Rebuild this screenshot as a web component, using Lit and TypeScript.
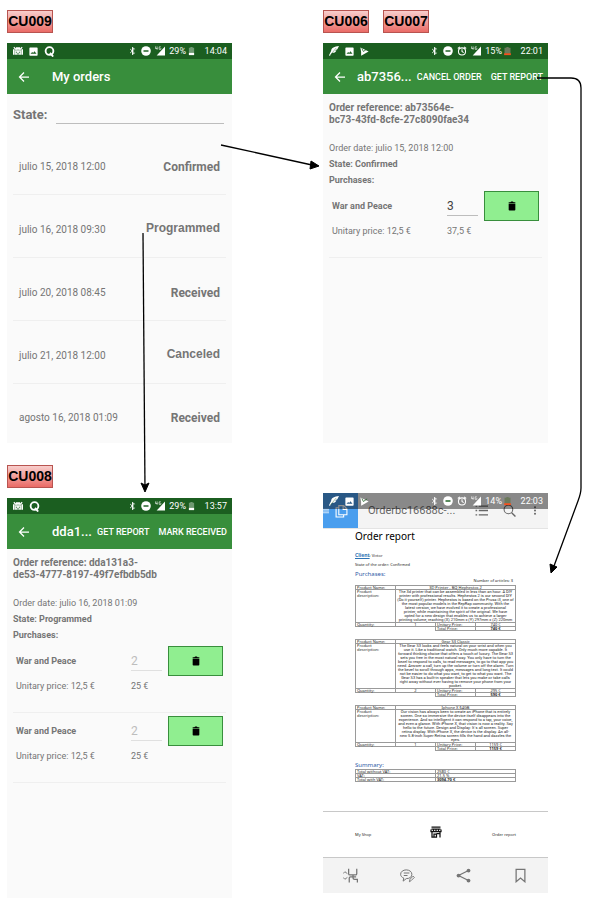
import { LitElement, html, svg, css, nothing, TemplateResult } from "lit";
import { customElement, property } from "lit/decorators.js";

type GlyphName =
  | "robot" | "photo" | "q" | "feather" | "play" | "bluetooth" | "dnd" | "alarm" | "signal"
  | "battery" | "batteryLow" | "back" | "trash" | "menu" | "copies" | "list" | "search" | "more"
  | "shop" | "fit" | "comment" | "share" | "bookmark";

const GLYPHS: Record<GlyphName, TemplateResult> = {
  robot: svg`<path d="M2 3l6 6M22 3l-6 6" stroke="currentColor" stroke-width="3"/><path d="M0 8h4v13H0zM20 8h4v13h-4zM7 3h10v6H7zM5 10h14v11H5z" fill="currentColor"/><path d="M7 15h3M14 15h3M9 19h6" stroke="#1b5e20" stroke-width="2"/>`,
  photo: svg`<path fill="currentColor" fill-rule="evenodd" d="M23 21V3a2 2 0 0 0-2-2H3a2 2 0 0 0-2 2v18a2 2 0 0 0 2 2h18a2 2 0 0 0 2-2zM8.500 13l2.500 3 3.500-4.500L20 18H4z"/>`,
  q: svg`<circle cx="12" cy="11" r="8.500" fill="none" stroke="currentColor" stroke-width="4"/><path d="M13 15l7 8" stroke="currentColor" stroke-width="4"/>`,
  feather: svg`<path fill="currentColor" d="M24 0C13 1 6 4 5 12l-5 10 2 2 5-7c6 0 9-2 11-6l-4 0 6-3z"/><path d="M17 5L3 22" stroke="#1b5e20" stroke-width="1"/>`,
  play: svg`<path fill="currentColor" d="M1 1l22 11L3 23V13z"/><path d="M5 4l4 8 10-7" stroke="#1b5e20" stroke-width="2" fill="none"/>`,
  bluetooth: svg`<path d="M6 7l11 10-5 5V2l5 5L6 17" fill="none" stroke="currentColor" stroke-width="2.500"/>`,
  dnd: svg`<circle cx="12" cy="12" r="11.500"/><path d="M6 12h12" stroke="#1b5e20" stroke-width="3.500"/>`,
  alarm: svg`<circle cx="12" cy="13" r="8.500" fill="none" stroke="currentColor" stroke-width="2.500"/><path d="M12 8v5l4 3M2 6l5-4M22 6l-5-4" fill="none" stroke="currentColor" stroke-width="2.500"/>`,
  signal: svg`<path fill="currentColor" d="M24 1v22H4z"/><path d="M1 1v5h5M5 1v8M14 2h-4v6h4V5" fill="none" stroke="currentColor" stroke-width="1.500"/>`,
  battery: svg`<path fill="#6f9a72" d="M9 1h6v2h4v14H5V3h4z"/><path fill="currentColor" d="M5 17h14v6H5z"/>`,
  batteryLow: svg`<path fill="#6c7a5c" d="M9 1h6v2h5v16H4V3h5z"/><path fill="#f4511e" d="M3 18h18v5H3z"/>`,
  back: svg`<path d="M22 12H4M12 3l-9 9 9 9" fill="none" stroke="currentColor" stroke-width="2.500"/>`,
  trash: svg`<path fill="currentColor" d="M4 3h4l2-2h4l2 2h4v3H4zM4 7h16v14a2 2 0 0 1-2 2H6a2 2 0 0 1-2-2z"/>`,
  menu: svg`<path d="M0 5h24M0 12h24M0 19h24" stroke="currentColor" stroke-width="3"/>`,
  copies: svg`<path d="M7 2h9l6 6v11H7zM15 2v7h7M7 6H2v17h14v-4" fill="none" stroke="currentColor" stroke-width="2"/>`,
  list: svg`<path d="M1 4h3M1 12h3M1 20h3M7 4h17M7 12h17M7 20h17" stroke="currentColor" stroke-width="2.500"/>`,
  search: svg`<circle cx="10" cy="10" r="8" fill="none" stroke="currentColor" stroke-width="2"/><path d="M16 16l7 7" stroke="currentColor" stroke-width="2.500"/>`,
  more: svg`<circle cx="12" cy="2" r="3"/><circle cx="12" cy="12" r="3"/><circle cx="12" cy="22" r="3"/>`,
  shop: svg`<path fill="none" stroke="currentColor" stroke-width="2.500" d="M3 2h18M3 6h18M1 11h22M2 7v5M7 7v5M12 7v5M17 7v5M22 7v5M4 12v10h9v-6H8v6M13 15h7M20 12v11"/>`,
  fit: svg`<path d="M0 9l3-3 4 3M0 15l3 3 4-3" fill="none" stroke="currentColor" stroke-width="1.500"/><path d="M9 1v8q0 2 2 2h9q2 0 2-2V1M10 23v-7q0-2 2-2h9M16 11v4q0 3 3 3h4v5" fill="none" stroke="currentColor" stroke-width="2"/>`,
  comment: svg`<path d="M10 3c5 0 9 3 9 7s-3 7-9 7l-5 4 1-5c-3-1-5-3-5-6 0-4 4-7 9-7zM6 8h9M6 12h6" fill="none" stroke="currentColor" stroke-width="1.600"/><path d="M15 22l1-4 5-5 2 2-5 5z" fill="#f3f3f3" stroke="currentColor" stroke-width="1.500"/>`,
  share: svg`<path d="M20 4L4 12l16 8" fill="none" stroke="currentColor" stroke-width="2"/><circle cx="20" cy="4" r="3"/><circle cx="4" cy="12" r="3"/><circle cx="20" cy="20" r="3"/>`,
  bookmark: svg`<path d="M5 2h14v20l-7-6-7 6z" fill="none" stroke="currentColor" stroke-width="2"/>`,
};

const glyph = (name: GlyphName) =>
  html`<svg class="glyph ${name}" viewBox="0 0 24 24" aria-hidden="true" fill="currentColor">${GLYPHS[name]}</svg>`;

const base = css`
  :host { display: block; font-family: Roboto, "Liberation Sans", sans-serif; color: #757575; }
  * { box-sizing: border-box; }
  button { border: 0; padding: 0; margin: 0; background: none; color: inherit; font: inherit; }
  input { border: 0; margin: 0; padding: 0; background: none; outline: none; font: inherit; border-radius: 0; min-width: 0; }
  h1, h2, p, ul { margin: 0; padding: 0; font: inherit; }
  .glyph { display: block; width: 10px; height: 10px; flex: none; }
`;

@customElement("status-bar")
class StatusBar extends LitElement {
  @property({ attribute: false }) notices: GlyphName[] = [];
  @property({ attribute: false }) system: GlyphName[] = [];
  @property() level = "";
  @property() clock = "";

  static styles = [base, css`
    :host { background: #1b5e20; color: #fff; height: 16px; }
    .bar { display: flex; align-items: center; height: 100%; padding: 0 5px 0 6px; font-size: 9px; line-height: 16px; }
    .notices { display: flex; align-items: center; gap: 6px; flex: 1; }
    .system { display: flex; align-items: center; gap: 4px; }
    .charge { display: flex; align-items: center; gap: 1px; }
    .notices .photo, .notices .play { width: 9px; height: 9px; }
    .notices .q { width: 11px; height: 11px; }
    .clock { width: 31px; text-align: right; }
    .bluetooth, .glyph.battery, .glyph.batteryLow { width: 9px; }
  `];

  render() {
    return html`<div class="bar">
      <div class="notices">${this.notices.map(glyph)}</div>
      <div class="system">
        ${this.system.map(glyph)}
        <span class="charge">${this.level}${glyph(this.level === "29%" ? "battery" : "batteryLow")}</span>
      </div>
      <span class="clock">${this.clock}</span>
    </div>`;
  }
}

@customElement("app-bar")
class AppBar extends LitElement {
  @property() heading = "";
  @property({ attribute: false }) actions: string[] = [];
  @property({ type: Boolean, reflect: true }) tight = false;

  static styles = [base, css`
    :host { background: #388e3c; color: #fff; }
    .bar { display: flex; align-items: center; height: 35px; padding: 0 5px 0 11px; }
    .nav { margin-right: 22px; }
    :host([tight]) .nav { margin-right: 11px; }
    .nav .glyph { width: 12px; height: 12px; }
    h1 { flex: 1; min-width: 0; font-size: 13px; font-weight: 500; line-height: 20px; white-space: nowrap; }
    .actions { display: flex; gap: 9px; font-size: 9px; font-weight: 500; line-height: 16px; white-space: nowrap; }
  `];

  render() {
    return html`<header class="bar">
      <button class="nav" aria-label="Back">${glyph("back")}</button>
      <h1>${this.heading}</h1>
      <div class="actions">${this.actions.map((a) => html`<button>${a}</button>`)}</div>
    </header>`;
  }
}

const ORDERS = [
  { date: "julio 15, 2018 12:00", state: "Confirmed", plain: false },
  { date: "julio 16, 2018 09:30", state: "Programmed", plain: true },
  { date: "julio 20, 2018 08:45", state: "Received", plain: false },
  { date: "julio 21, 2018 12:00", state: "Canceled", plain: true },
  { date: "agosto 16, 2018 01:09", state: "Received", plain: false },
];

@customElement("order-list")
class OrderList extends LitElement {
  static styles = [base, css`
    .body { padding: 0 6px; }
    .filter { display: flex; align-items: center; gap: 9px; height: 38px; padding-right: 2px; }
    label { font-size: 13px; font-weight: 700; line-height: 20px; padding-top: 4px; }
    input { flex: 1; height: 20px; margin-top: 2px; border-bottom: 1px solid #bdbdbd; color: #424242; font-size: 12px; }
    ul { list-style: none; }
    li { display: flex; justify-content: space-between; align-items: center; height: 63px; padding: 8px 6px 0; border-bottom: 1px solid #efefef; }
    li:last-child { border-bottom: 0; height: 59px; }
    .date { font-size: 10px; line-height: 16px; }
    .state { font-size: 12px; font-weight: 700; line-height: 16px; }
    .plain { font-family: "Liberation Sans", sans-serif; padding-bottom: 4px; }
  `];

  render() {
    return html`<section class="body">
      <div class="filter"><label for="state">State:</label><input id="state" type="text" /></div>
      <ul>${ORDERS.map((o) => html`<li>
        <span class="date">${o.date}</span><span class="state ${o.plain ? "plain" : ""}">${o.state}</span>
      </li>`)}</ul>
    </section>`;
  }
}

interface Purchase { name: string; unit: string; qty: string; total: string }

@customElement("order-detail")
class OrderDetail extends LitElement {
  @property({ attribute: false }) reference: string[] = [];
  @property() date = "";
  @property() state = "";
  @property({ type: Boolean }) locked = false;
  @property({ attribute: false }) purchases: Purchase[] = [];

  static styles = [base, css`
    .body { padding: 8px 6px 0; }
    h2 { font-size: 10px; font-weight: 700; line-height: 12px; margin-bottom: 14px; }
    p { font-size: 9px; line-height: 16px; }
    .strong { font-weight: 700; }
    .item { display: grid; grid-template-columns: 1fr 31px 55px; column-gap: 6px; align-items: center;
      grid-template-rows: 36px 14px; height: 70px; padding: 0 3px; border-bottom: 1px solid #efefef; }
    .name { font-size: 9px; font-weight: 700; }
    .qty { width: 31px; height: 20px; border-bottom: 1px solid #bdbdbd; font-size: 12px; color: #424242; }
    .qty:disabled { color: #bdbdbd; border-color: #e0e0e0; }
    .remove { display: grid; place-items: center; height: 30px; background: #90ee90; border: 1px solid #388e3c; color: #000; }
    .unit, .total { font-size: 9px; line-height: 14px; white-space: nowrap; }
    .total { grid-column: 2 / 4; }
  `];

  render() {
    return html`<section class="body">
      <h2>Order reference: ${this.reference[0]}<br />${this.reference[1]}</h2>
      <p>Order date: ${this.date}</p>
      <p class="strong">State: ${this.state}</p>
      <p class="strong">Purchases:</p>
      ${this.purchases.map((p) => html`<div class="item">
        <span class="name">${p.name}</span>
        <input class="qty" type="text" aria-label="Quantity" .value=${p.qty} ?disabled=${this.locked} />
        <button class="remove" aria-label="Remove">${glyph("trash")}</button>
        <span class="unit">Unitary price: ${p.unit}</span>
        <span class="total">${p.total}</span>
      </div>`)}
    </section>`;
  }
}

interface Article { name: string; lines: string[]; qty: string; unit: string; total: string }

const ARTICLES: Article[] = [
  {
    name: "3D Printer - BQ Hephestos 2", qty: "1", unit: "740 €", total: "740 €",
    lines: [
      "The 3d printer that can be assembled in less than an hour. A DIY",
      "printer with professional results. Hephestos 2 is our second DIY",
      "(Do it yourself) printer. Hephestos is based on the Prusa i3, one of",
      "the most popular models in the RepRap community. With the",
      "latest version, we have evolved it to create a professional",
      "printer, while maintaining the spirit of the original. We have",
      "opted for a new design that enables us to achieve a larger",
      "printing volume, reaching (X) 210mm x (Y) 297mm x (Z) 220mm",
    ],
  },
  {
    name: "Gear S3 Classic", qty: "2", unit: "295 €", total: "590 €",
    lines: [
      "The Gear S3 looks and feels natural on your wrist and when you",
      "use it. Like a traditional watch. Only much more capable. It",
      "forward thinking choice that offers a touch of luxury. The Gear S3",
      "sets you free in the most natural way. You only have to turn the",
      "bezel to respond to calls, to read messages, to go to that app you",
      "need. Answer a call, turn up the volume or turn off the alarm. Turn",
      "the bezel to scroll through apps, messages and long text. It could",
      "not be easier to do what you want, to get to what you want. The",
      "Gear S3 has a built-in speaker that lets you make or take calls",
      "right away without ever having to remove your phone from your",
      "pocket.",
    ],
  },
  {
    name: "Iphone X 64GB", qty: "1", unit: "1159 €", total: "1159 €",
    lines: [
      "Our vision has always been to create an iPhone that is entirely",
      "screen. One so immersive the device itself disappears into the",
      "experience. And so intelligent it can respond to a tap, your voice,",
      "and even a glance. With iPhone X, that vision is now a reality. Say",
      "hello to the future. Design and Display: It´s all screen. Super",
      "retina display. With iPhone X, the device is the display. An all-",
      "new 5.8-inch Super Retina screen fills the hand and dazzles the",
      "eyes.",
    ],
  },
];

@customElement("report-viewer")
class ReportViewer extends LitElement {
  static styles = [base, css`
    :host { position: relative; background: #fff; color: #222; font-family: "Noto Sans", sans-serif; }
    .overlay { position: absolute; top: 0; left: 0; right: 0; background: rgba(0, 0, 0, 0.44); }
    .tools { display: flex; align-items: center; height: 36px; background: #f4f4f4; border-bottom: 1px solid #e4e4e4;
      color: #666; font-family: Roboto, sans-serif; padding-right: 9px; }
    .tab { display: flex; align-items: center; gap: 6px; width: 35px; height: 35px; background: #4a9eee; color: #fff; }
    .tab .menu { width: 6px; height: 10px; }
    .tab .copies { width: 13px; height: 14px; }
    .name { flex: 1; padding-left: 10px; font-size: 11px; line-height: 16px; white-space: nowrap; }
    .icons { display: flex; gap: 15px; }
    .icons .glyph { width: 13px; height: 13px; }
    .icons .more { width: 8px; }
    .doc { padding: 0 32px; font-size: 4px; line-height: 4px; height: 283px; border-bottom: 1px solid #c8c8c8; }
    h1 { font-size: 10px; line-height: 15px; color: #000; }
    .client { line-height: 6px; margin-top: 8px; }
    .client b { color: #2e74b5; font-size: 5px; text-decoration: underline; }
    .status { margin-top: 3px; line-height: 6px; }
    h2 { color: #2f5aa8; font-size: 6px; line-height: 8px; margin-top: 2px; }
    .closing { margin-top: 10px; }
    .count { text-align: right; line-height: 4px; margin: 1px 3px 2px; }
    table { width: 100%; border-collapse: collapse; table-layout: fixed; margin-bottom: 8px; }
    td, th { border: 1px solid #9a9a9a; padding: 0 1px; height: 4px; line-height: 3px; text-align: center; vertical-align: top; font-weight: 400; }
    th { text-align: left; }
    .left { text-align: left; }
    .text { line-height: 4px; padding: 0; white-space: nowrap; font-family: Roboto, sans-serif; }
    .label { line-height: 4px; }
    .blank { border: 0; }
    .summary { margin: 0; }
    .foot { display: grid; grid-template-columns: 1fr auto 1fr; align-items: center; height: 46px; padding: 0 32px;
      font-size: 4px; border-bottom: 1px solid #c8c8c8; }
    .foot .shop { width: 12px; height: 12px; margin-bottom: 6px; color: #111; }
    .end { text-align: right; }
    .dock { display: flex; justify-content: space-between; align-items: center; height: 35px; padding: 0 20px; background: #f3f3f3; color: #757575; }
    .dock .glyph { width: 15px; height: 15px; }
  `];

  render() {
    return html`
      <div class="tools">
        <div class="tab">${glyph("menu")}${glyph("copies")}</div>
        <span class="name">Orderbc16688c-...</span>
        <div class="icons">
          <button aria-label="Contents">${glyph("list")}</button>
          <button aria-label="Search">${glyph("search")}</button>
          <button aria-label="More">${glyph("more")}</button>
        </div>
      </div>
      <status-bar class="overlay" .notices=${["feather", "photo", "play"]} .system=${["bluetooth", "dnd", "alarm", "signal"]} level="14%" clock="22:03"></status-bar>
      <article class="doc">
        <h1>Order report</h1>
        <p class="client"><b>Client</b>: Victor</p>
        <p class="status">State of the order: Confirmed</p>
        <h2>Purchases:</h2>
        <p class="count">Number of articles: 3</p>
        ${ARTICLES.map((a) => html`<table>
          <tr><th>Product Name:</th><td colspan="3">${a.name}</td></tr>
          <tr><th class="label">Product description:</th><td colspan="3" class="text">${a.lines.map((l, i) => html`${i ? html`<br />` : nothing}${l}`)}</td></tr>
          <tr><th>Quantity:</th><td>${a.qty}</td><td class="left">Unitary Price:</td><td>${a.unit}</td></tr>
          <tr><td class="blank" colspan="2"></td><td class="left">Total Price:</td><td><b>${a.total}</b></td></tr>
        </table>`)}
        <h2 class="closing">Summary:</h2>
        <table class="summary">
          <tr><th>Total without VAT:</th><td class="left">2580 €</td></tr>
          <tr><th>VAT:</th><td class="left">21.5 %</td></tr>
          <tr><th>Total with VAT:</th><td class="left"><b>3094.70 €</b></td></tr>
        </table>
      </article>
      <div class="foot"><span>My Shop</span>${glyph("shop")}<span class="end">Order report</span></div>
      <nav class="dock">
        <button aria-label="Fit">${glyph("fit")}</button>
        <button aria-label="Comment">${glyph("comment")}</button>
        <button aria-label="Share">${glyph("share")}</button>
        <button aria-label="Bookmark">${glyph("bookmark")}</button>
      </nav>`;
  }
}

@customElement("app-root")
class AppRoot extends LitElement {
  static styles = [base, css`
    :host { position: relative; background: #fff; }
    .board { display: grid; grid-template-columns: 1fr 1fr; column-gap: 91px; padding: 10px 47px 9px 7px; align-items: start; }
    .column { min-width: 0; display: flex; flex-direction: column; gap: 10px; }
    .tags { display: flex; gap: 14px; }
    .tag { height: 23px; width: 46px; border: 1px solid #b85450; background: linear-gradient(#f8cecc, #ea6b66);
      color: #000; font: 700 14px/21px "Liberation Sans", sans-serif; text-align: center; white-space: nowrap; }
    .phone { min-height: 400px; background: #fafafa; }
    .below { margin-top: 12px; }
    .viewer { margin-top: 40px; }
    .links { position: absolute; inset: 0; width: 100%; height: 100%; pointer-events: none; }
  `];

  render() {
    return html`
      <main class="board">
        <div class="column">
          <div class="tags"><span class="tag">CU009</span></div>
          <div class="phone">
            <status-bar .notices=${["robot", "photo", "q"]} .system=${["bluetooth", "dnd", "signal"]} level="29%" clock="14:04"></status-bar>
            <app-bar heading="My orders"></app-bar>
            <order-list></order-list>
          </div>
          <div class="tags below"><span class="tag">CU008</span></div>
          <div class="phone">
            <status-bar .notices=${["robot", "q"]} .system=${["bluetooth", "dnd", "signal"]} level="29%" clock="13:57"></status-bar>
            <app-bar heading="dda1..." .actions=${["GET REPORT", "MARK RECEIVED"]}></app-bar>
            <order-detail .reference=${["dda131a3-", "de53-4777-8197-49f7efbdb5db"]} date="julio 16, 2018 01:09" state="Programmed" locked
              .purchases=${[
                { name: "War and Peace", unit: "12,5 €", qty: "2", total: "25 €" },
                { name: "War and Peace", unit: "12,5 €", qty: "2", total: "25 €" },
              ]}></order-detail>
          </div>
        </div>
        <div class="column">
          <div class="tags"><span class="tag">CU006</span><span class="tag">CU007</span></div>
          <div class="phone">
            <status-bar .notices=${["feather", "photo", "play"]} .system=${["bluetooth", "dnd", "alarm", "signal"]} level="15%" clock="22:01"></status-bar>
            <app-bar tight heading="ab7356..." .actions=${["CANCEL ORDER", "GET REPORT"]}></app-bar>
            <order-detail .reference=${["ab73564e-", "bc73-43fd-8cfe-27c8090fae34"]} date="julio 15, 2018 12:00" state="Confirmed"
              .purchases=${[{ name: "War and Peace", unit: "12,5 €", qty: "3", total: "37,5 €" }]}></order-detail>
          </div>
          <report-viewer class="viewer"></report-viewer>
        </div>
      </main>
      <svg class="links" viewBox="0 0 595 907" preserveAspectRatio="none" aria-hidden="true" fill="none" stroke="#000">
        <path d="M221 145L312 165" stroke-width="1.300"/>
        <path d="M319 166l-8-5-1 8z" fill="#000"/>
        <path d="M143 233l2 256" stroke-width="1.300"/>
        <path d="M145 492l-4-9 4 2 4-2z" fill="#000"/>
        <path d="M537 78h34q10 0 10 10v400q0 5-3 13l-24 65" stroke-width="1.300"/>
        <path d="M551 573l-1-9 7 3z" fill="#000"/>
      </svg>`;
  }
}
